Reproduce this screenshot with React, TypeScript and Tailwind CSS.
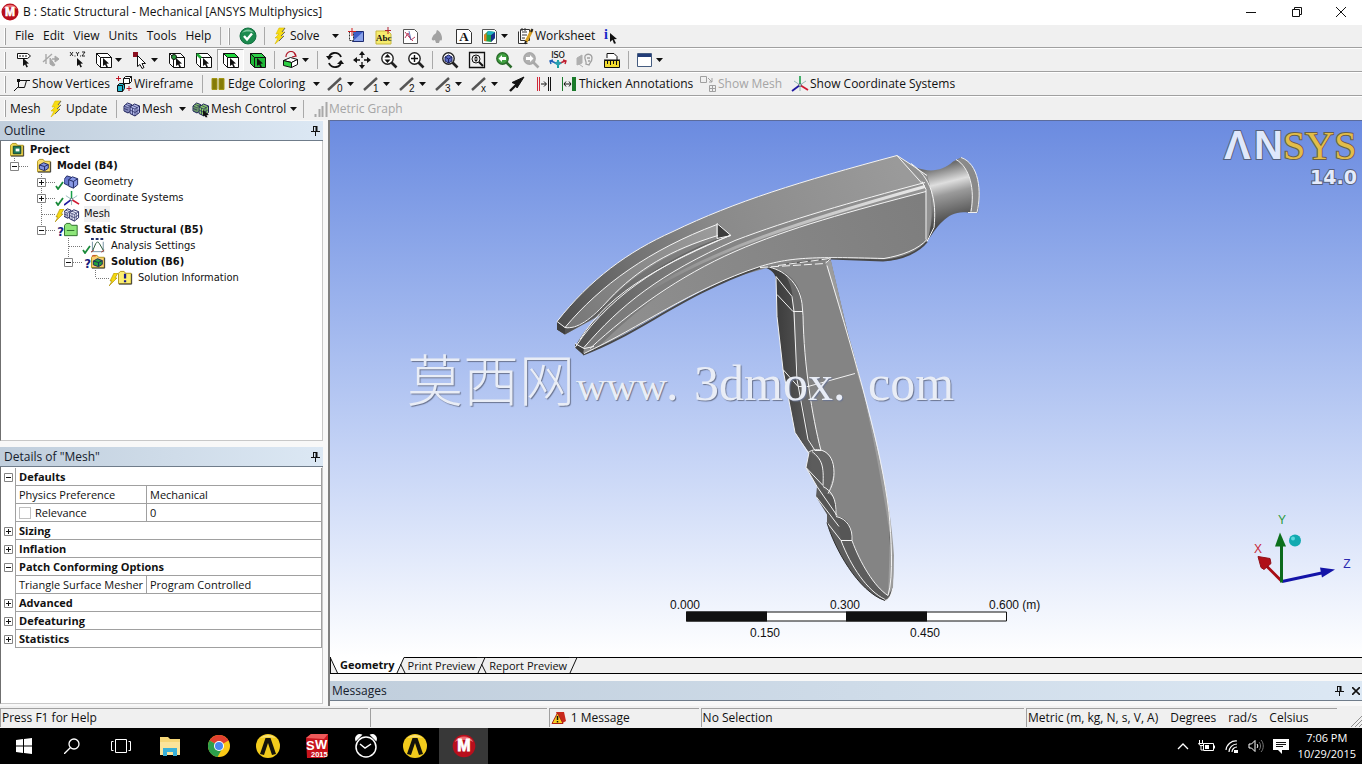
import { useState } from 'react';
import type { ReactNode } from 'react';

interface ChildrenProps {
  children: ReactNode;
}

/* ---------- Icon primitives ---------- */

function Glyph({ children }: ChildrenProps) {
  return (
    <svg viewBox="0 0 18 18" className="h-[18px] w-[18px] shrink-0" fill="none" stroke="#111" aria-hidden="true">
      {children}
    </svg>
  );
}

const Cursor = () => (
  <path d="M8 7l6 5.6-2.6.2 1.5 3-1.4.6-1.4-3L8 15z" fill="#111" stroke="none" />
);

function SelectCube({ face = 'none', body = '#fff' }: { face?: string; body?: string }) {
  return (
    <>
      <path d="M1.5 2.5h11l4 4v10h-11l-4-4z" fill={body} />
      <path d="M1.5 2.5h11l4 4h-11z" fill={face} />
      <path d="M5.5 6.5v10" />
      <Cursor />
    </>
  );
}

const Bolt = () => (
  <Glyph>
    <path d="M8 1h6l-3 4h3l-4 4h3L4 17l3-6H4l4-4H5z" fill="#f7dc12" stroke="#d8b800" strokeWidth=".6" />
    <path d="M14 1l-3 4M14 5l-4 4M13 9l-5 5" stroke="#666" strokeWidth="1" />
  </Glyph>
);

const MeshCubes = ({ fill = '#b4bbea' }: { fill?: string }) => (
  <>
    <path d="M1 6l3.500-3 4 1.500v6L5 13l-4-2z" fill={fill} stroke="#20245c" />
    <path d="M1 6l4 1.500V13M5 7.500l3.500-3M1 8.500l4 1.500M3 4.500l4 1.500M3 7v5" stroke="#20245c" strokeWidth=".7" />
    <path d="M7 7l4.500-3 5 2v6.500L12 16l-5-2.500z" fill={fill} stroke="#20245c" />
    <path d="M7 7l5 2v7M12 9l4.500-3M7 10l5 2.500 4.500-3M9.500 8v7M9.500 5.500l4.500 2V14" stroke="#20245c" strokeWidth=".7" />
  </>
);

const Lens = ({ color = '#222', fill = '#fff' }: { color?: string; fill?: string }) => (
  <>
    <path d="M11.500 11.500l5 5" stroke={color} strokeWidth="2.600" />
    <circle cx="7.500" cy="7.500" r="5.700" fill={fill} stroke={color} strokeWidth="1.400" />
  </>
);

const Axes = () => (
  <>
    <path d="M9 10V1" stroke="#18a04a" strokeWidth="1.600" />
    <path d="M9 10l-8 6" stroke="#2018a0" strokeWidth="1.800" />
    <path d="M9 10l8 5" stroke="#d01830" strokeWidth="1.800" />
    <path d="M9 10L3 6M9 10l6-4M9 10v6" stroke="#7aa8a8" strokeWidth=".8" />
    <circle cx="9" cy="10" r="1.300" fill="#fff" stroke="#345" strokeWidth=".7" />
  </>
);

const EdgeIcon = ({ mark }: { mark: string }) => (
  <Glyph>
    <path d="M1 15L14 3" stroke="#555" strokeWidth="2.400" />
    <text x="10" y="17" fontSize="10" fill="#111" stroke="none" fontFamily="Liberation Sans, sans-serif">
      {mark}
    </text>
  </Glyph>
);

const Caret = () => (
  <svg viewBox="0 0 7 4" className="h-1 w-[7px] shrink-0" aria-hidden="true">
    <path d="M0 0h7L3.500 4z" fill="#111" />
  </svg>
);

const Pin = () => (
  <svg viewBox="0 0 9 11" className="h-[11px] w-[9px]" fill="none" stroke="#111" aria-hidden="true">
    <path d="M2.500 1v5M2 1.500h4M0 6.500h9M4.500 7v4" />
    <path d="M5.500 1v5" strokeWidth="2" />
  </svg>
);

/* ---------- Toolbar pieces ---------- */

const Handle = () => <span className="mr-1 ml-1 h-[17px] w-[2px] shrink-0 border-r border-[#a0a0a0] bg-white" />;
const Separator = () => <span className="mx-[3px] h-[18px] w-px shrink-0 bg-[#a9a9a9]" />;

interface ToolProps {
  label: string;
  children: ReactNode;
  drop?: boolean;
  active?: boolean;
}

function Tool({ label, children, drop = false, active = false }: ToolProps) {
  const width = drop ? 'w-9 pl-1 gap-[2px]' : 'w-[27px] justify-center';
  const look = active ? 'border border-[#a0a0a0] border-r-white border-b-white bg-[#f8f8f8]' : '';
  return (
    <button type="button" aria-label={label} className={`flex h-[22px] shrink-0 items-center ${width} ${look}`}>
      {children}
      {drop && <Caret />}
    </button>
  );
}

interface TextToolProps {
  label: string;
  width: string;
  children?: ReactNode;
  drop?: boolean;
  disabled?: boolean;
}

function TextTool({ label, width, children, drop = false, disabled = false }: TextToolProps) {
  return (
    <button
      type="button"
      disabled={disabled}
      className={`flex h-[22px] shrink-0 items-center gap-px px-[3px] whitespace-nowrap ${width} ${disabled ? 'text-[#a5a5a5]' : ''}`}
    >
      {children}
      <span>{label}</span>
      {drop && (
        <span className="ml-auto">
          <Caret />
        </span>
      )}
    </button>
  );
}

function ToolRow({ children }: ChildrenProps) {
  return (
    <div className="flex h-6 items-center overflow-hidden border-b border-[#a0a0a0] border-t border-t-white">
      <Handle />
      {children}
    </div>
  );
}

/* ---------- Title bar ---------- */

const MechanicalLogo = ({ size }: { size: string }) => (
  <svg viewBox="0 0 18 18" className={size} aria-hidden="true">
    <circle cx="9" cy="9" r="8.500" fill="#b80f1c" />
    <path d="M2 6a8 8 0 0114 0c-4-2-10-2-14 0z" fill="#ec6d72" />
    <text x="9" y="13" textAnchor="middle" fontSize="12" fontWeight="900" fill="#fff" stroke="#fff" strokeWidth=".6" fontFamily="Liberation Sans, sans-serif">
      M
    </text>
  </svg>
);

function TitleBar() {
  return (
    <header className="flex h-6 shrink-0 items-center bg-white pl-px">
      <MechanicalLogo size="h-[18px] w-[18px]" />
      <h1 className="ml-1 flex-1">B : Static Structural - Mechanical [ANSYS Multiphysics]</h1>
      <div className="flex h-5">
        <button type="button" aria-label="Minimize" className="flex w-[46px] items-center justify-center">
          <svg viewBox="0 0 10 10" className="h-[10px] w-[10px]" stroke="#111">
            <path d="M0 5.500h10" />
          </svg>
        </button>
        <button type="button" aria-label="Restore" className="flex w-[46px] items-center justify-center">
          <svg viewBox="0 0 10 10" className="h-[10px] w-[10px]" fill="none" stroke="#111">
            <path d="M.5 2.500h7v7h-7zM2.500 2.500v-2h7v7h-2" />
          </svg>
        </button>
        <button type="button" aria-label="Close" className="flex w-[42px] items-center justify-center">
          <svg viewBox="0 0 10 10" className="h-[10px] w-[10px]" stroke="#111">
            <path d="M0 0l10 10M10 0L0 10" />
          </svg>
        </button>
      </div>
    </header>
  );
}

/* ---------- Toolbars ---------- */

const MENUS = ['File', 'Edit', 'View', 'Units', 'Tools', 'Help'];

function MenuRow() {
  return (
    <ToolRow>
      <nav className="flex w-[207px] shrink-0 gap-px pl-px">
        {MENUS.map((menu) => (
          <button key={menu} type="button" className="px-1">
            {menu}
          </button>
        ))}
      </nav>
      <Separator />
      <Handle />
      <Tool label="Check">
        <Glyph>
          <circle cx="9" cy="9" r="8" fill="#1c8a4e" stroke="#127040" />
          <path d="M3 6a7 7 0 0112 0c-3-2-9-2-12 0z" fill="#7cc79c" stroke="none" />
          <path d="M5 9l3 3.500 5-6" stroke="#fff" strokeWidth="2.400" />
        </Glyph>
      </Tool>
      <Separator />
      <TextTool label="Solve" width="w-[74px]" drop>
        <Bolt />
      </TextTool>
      <Tool label="New Section Plane">
        <Glyph>
          <path d="M5.500 4.500h11v10h-11z" fill="#3f5fc8" stroke="#1c2a70" />
          <path d="M6 14L16 5v9z" fill="#89a2ea" stroke="none" />
          <path d="M2.500 4.500h4v9h-4z" fill="#fff" stroke="#333" strokeDasharray="2 1" />
          <path d="M5 1v8M1 4.500h8" stroke="#d02020" />
        </Glyph>
      </Tool>
      <Tool label="New Chart">
        <Glyph>
          <path d="M2 4h12l3 3v10H2z" fill="#f6ec6c" stroke="#c8b840" />
          <text x="2" y="14" fontSize="9" fontWeight="700" fill="#111" stroke="none" fontFamily="Liberation Serif, serif">
            Abc
          </text>
          <path d="M14 0v7M11 3.500h6" stroke="#b02030" />
        </Glyph>
      </Tool>
      <Tool label="New Figure">
        <Glyph>
          <path d="M2.500 2.500h11l3 3v11h-14z" fill="#fff" stroke="#555" />
          <path d="M4 5l4 5 4 4M4 11l3-5 3 7 4-3" stroke="#c04060" />
          <path d="M8 4l2 9" stroke="#4060b0" strokeWidth=".8" />
        </Glyph>
      </Tool>
      <Tool label="Comment">
        <Glyph>
          <path d="M9 3c3 1 5 5 5 8s-1 3-2 2l-1 3H8l-1-3c-2 1-4 0-3-2s1-3 3-4 1-3 2-4z" fill="#a2a2a2" stroke="none" />
        </Glyph>
      </Tool>
      <Tool label="Annotation">
        <Glyph>
          <path d="M1.500 2.500h12l3 3v11h-15z" fill="#fff" stroke="#333" />
          <text x="9" y="14" textAnchor="middle" fontSize="13" fontWeight="700" fill="#111" stroke="none" fontFamily="Liberation Serif, serif">
            A
          </text>
        </Glyph>
      </Tool>
      <Tool label="Image" drop>
        <Glyph>
          <path d="M1.500 2.500h12l2 2v12h-14z" fill="#fff" stroke="#555" />
          <path d="M3 8l4-4 7 1v6l-4 4-7-1z" fill="#1fa04a" stroke="none" />
          <path d="M10 8l4-3v6l-4 4z" fill="#18308a" stroke="none" />
          <path d="M3 8l2.500-2v8L3 14z" fill="#e08020" stroke="none" />
          <path d="M7 4l7 1-4 3-4-.5z" fill="#20b0c8" stroke="none" />
        </Glyph>
      </Tool>
      <TextTool label="Worksheet" width="w-[84px]">
        <Glyph>
          <path d="M4.500 2.500h9v11h-9zM2.500 4.500v12h9" fill="#fff" stroke="#333" />
          <path d="M6 5h5M6 8h5M6 11h3M6 1v3M9 1v3" stroke="#333" />
          <path d="M16 3l-6 12" stroke="#d8a020" strokeWidth="3" />
          <path d="M16.500 2l-1.500 3M9 17l1-3" stroke="#222" strokeWidth="2" />
        </Glyph>
      </TextTool>
      <Tool label="Selection Information">
        <Glyph>
          <text x="2" y="12" fontSize="14" fontWeight="700" fill="#1828c8" stroke="none" fontFamily="Liberation Serif, serif">
            i
          </text>
          <path d="M8 6l7 6-3 .2 2 4-2 .6-1.500-4L8 15z" fill="#111" stroke="none" />
        </Glyph>
      </Tool>
    </ToolRow>
  );
}

function GraphicsRow() {
  return (
    <ToolRow>
      <Tool label="Label">
        <Glyph>
          <path d="M2.500 2.500h10l3 2.500-3 2.500h-10z" fill="#fff" />
          <path d="M5 4v2M8 4v2M11 4v2" />
          <Cursor />
        </Glyph>
      </Tool>
      <Tool label="Direction">
        <Glyph>
          <g stroke="#a8a8a8">
            <path d="M1 11l9-8M4 3v10M10 8h6" strokeWidth="1.400" />
            <path d="M13 5l4 3-4 3zM8 7l5 7-2 1-3-2z" fill="#a8a8a8" />
          </g>
        </Glyph>
      </Tool>
      <Tool label="Hit Point Coordinate">
        <Glyph>
          <path d="M1 1l3 4M4 1L1 5M7 1l1.500 2L10 1M8.500 3v2M13 1h3l-3 4h3M5.500 5h1M11 5h1" strokeWidth=".9" />
          <Cursor />
        </Glyph>
      </Tool>
      <Tool label="Select Geometry" drop>
        <Glyph>
          <SelectCube />
        </Glyph>
      </Tool>
      <Tool label="Select Mode" drop>
        <Glyph>
          <path d="M2 1h5v5H2z" fill="#8c1020" stroke="none" />
          <path d="M6.500 4.500l8 8h-3.500l2 4-2 1-2-4-2.500 2z" fill="#fff" />
        </Glyph>
      </Tool>
      <Tool label="Vertex">
        <Glyph>
          <SelectCube />
          <circle cx="6" cy="6" r="2.500" fill="#2a9a3a" />
        </Glyph>
      </Tool>
      <Tool label="Edge">
        <Glyph>
          <SelectCube />
          <path d="M2 3l4 4" stroke="#1fae35" strokeWidth="2.500" />
        </Glyph>
      </Tool>
      <Tool label="Face" active>
        <Glyph>
          <SelectCube face="#1fd63c" />
        </Glyph>
      </Tool>
      <Tool label="Body">
        <Glyph>
          <SelectCube face="#2cd048" body="#1fb838" />
        </Glyph>
      </Tool>
      <Separator />
      <Tool label="Extend Selection" drop>
        <Glyph>
          <path d="M1.500 9.500l7-3 7 2-6 3z" fill="#fff" />
          <path d="M1.500 9.500l8 2v5l-8-2z" fill="#2fd044" />
          <path d="M9.500 11.500l6-3v5l-6 3z" fill="#fff" />
          <path d="M4 6a5 5 0 0110-1M12 2l2 3-4 1" stroke="#b01828" strokeWidth="1.200" />
        </Glyph>
      </Tool>
      <Separator />
      <Tool label="Rotate">
        <Glyph>
          <path d="M3 8a6 5 0 0112-2M15 10a6 5 0 01-12 2" strokeWidth="1.800" />
          <path d="M0 5h7L3 9zM18 13h-7l4-4z" fill="#111" stroke="none" />
        </Glyph>
      </Tool>
      <Tool label="Pan">
        <Glyph>
          <path d="M9 2v14M2 9h14" strokeDasharray="5 4" strokeWidth="1.300" />
          <path d="M9 0l3 4H6zM9 18l3-4H6zM0 9l4-3v6zM18 9l-4-3v6z" fill="#111" stroke="none" />
        </Glyph>
      </Tool>
      <Tool label="Zoom">
        <Glyph>
          <Lens />
          <path d="M7.500 3l3 3.500h-6zM7.500 12l3-3.500h-6z" fill="#111" stroke="none" />
        </Glyph>
      </Tool>
      <Tool label="Box Zoom">
        <Glyph>
          <Lens />
          <path d="M7.500 4v7M4 7.500h7" strokeWidth="1.400" />
        </Glyph>
      </Tool>
      <Separator />
      <Tool label="Zoom To Fit">
        <Glyph>
          <Lens />
          <path d="M4 6l3.500-2L11 6v4l-3.500 2L4 10z" fill="#5a6ac8" stroke="#1c2460" />
          <path d="M4 6l3.500 2L11 6M7.500 8v4" stroke="#1c2460" />
        </Glyph>
      </Tool>
      <Tool label="Magnifier Window">
        <Glyph>
          <path d="M1.500 1.500h15v15h-15z" strokeWidth="1.300" />
          <circle cx="8" cy="8" r="4" />
          <path d="M11 11l4 4" strokeWidth="2" />
          <path d="M8 5l2 2.500H6zM8 11l2-2.500H6z" fill="#111" stroke="none" />
        </Glyph>
      </Tool>
      <Tool label="Previous View">
        <Glyph>
          <Lens color="#2a6a2a" fill="#3fa040" />
          <path d="M3.500 7.500L7 4v2h4v3H7v2z" fill="#fff" stroke="none" />
        </Glyph>
      </Tool>
      <Tool label="Next View">
        <Glyph>
          <Lens color="#a8a8a8" fill="#b0b0b0" />
          <path d="M11.500 7.500L8 4v2H4v3h4v2z" fill="#fff" stroke="none" />
        </Glyph>
      </Tool>
      <Tool label="Isometric View">
        <Glyph>
          <text x="9" y="7" textAnchor="middle" fontSize="8" fill="#111" stroke="#111" strokeWidth=".2" fontFamily="DejaVu Sans, sans-serif">
            ISO
          </text>
          <path d="M9 17V9" stroke="#18a0a0" strokeWidth="2" />
          <path d="M9 13l-7-3M4 9l-3 1 1 3" stroke="#2060b8" strokeWidth="1.400" />
          <path d="M9 13l7-3M14 9l3 1-1 3" stroke="#c02030" strokeWidth="1.400" />
          <path d="M5 12l4-2 4 2-4 3z" fill="#2aa0b0" stroke="none" />
        </Glyph>
      </Tool>
      <Tool label="Look At">
        <Glyph>
          <path d="M1 14V7l5-3v8zM3 13l4 3" fill="#b0b0b0" stroke="#b0b0b0" />
          <path d="M9 5c2-3 7-2 7 2s-2 4-3 7l-3-1c1-3-2-4-1-8zM11 7h3M12 10h2" stroke="#a0a0a0" strokeWidth="1.300" />
        </Glyph>
      </Tool>
      <Tool label="Manage Views">
        <Glyph>
          <path d="M4 7V2.500h7l3 3V9" fill="#fff" />
          <path d="M1.500 9.500h15v7h-15z" fill="#f3dc30" />
          <path d="M4.500 10v3M7.500 10v4M10.500 10v3M13.500 10v4M1 9h16" />
        </Glyph>
      </Tool>
      <Separator />
      <Tool label="Viewports" drop>
        <Glyph>
          <path d="M1.500 2.500h14v13h-14z" fill="#fff" stroke="#455c80" />
          <path d="M2 3h13v3H2z" fill="#223c78" stroke="none" />
        </Glyph>
      </Tool>
    </ToolRow>
  );
}

function DisplayRow() {
  return (
    <ToolRow>
      <TextTool label="Show Vertices" width="w-[102px]">
        <Glyph>
          <path d="M4 5.500h13M13.500 5.500l-2 7h-6v-7M1 16l4-4" />
          <path d="M4 4h3v3H4z" fill="#111" stroke="none" />
        </Glyph>
      </TextTool>
      <TextTool label="Wireframe" width="w-[87px]">
        <Glyph>
          <path d="M2.500 10.500l2-2h5v5l-2 3h-5z" fill="#22b8d0" />
          <path d="M2.500 10.500h5v6M7.500 10.500l2-2" />
          <path d="M8.500 3.500l2-2h6v5l-2 2h-6zM8.500 3.500h6v5M14.500 3.500l2-2" fill="#fff" />
          <path d="M3.500 1v5M1 3.500h5M14 11v5M11.500 13.500h5" stroke="#c01828" />
        </Glyph>
      </TextTool>
      <Separator />
      <TextTool label="Edge Coloring" width="w-[117px]" drop>
        <Glyph>
          <path d="M3 3.500h5v11H3zM10 3.500h5v11h-5z" fill="#857b08" stroke="#a39614" />
        </Glyph>
      </TextTool>
      {['0', '1', '2', '3', 'x'].map((mark) => (
        <Tool key={mark} label={`Edge connection ${mark}`} drop>
          <EdgeIcon mark={mark} />
        </Tool>
      ))}
      <Tool label="Show edge direction">
        <Glyph>
          <path d="M2 16l8-8" strokeWidth="2.400" />
          <path d="M16 2L4 7.500l3.500 1.500L9 13z" fill="#111" />
        </Glyph>
      </Tool>
      <Tool label="Show edge joints">
        <Glyph>
          <path d="M2.500 2v14M4.500 2v14" stroke="#d02838" />
          <path d="M13.500 2v14M15.500 2v14M6 9h5M9 6.500L11.500 9 9 11.500" />
        </Glyph>
      </Tool>
      <TextTool label="Thicken Annotations" width="w-[139px]">
        <Glyph>
          <path d="M2.500 2v14" stroke="#1a7a2a" />
          <path d="M12 2h4v14h-4z" fill="#1a7a2a" stroke="none" />
          <path d="M4 9h7M6 6.500L4 9l2 2.500M9 6.500L11 9l-2 2.500" />
        </Glyph>
      </TextTool>
      <TextTool label="Show Mesh" width="w-[92px]" disabled>
        <Glyph>
          <path d="M1.500 1.500h6v6h-6zM9 3l4 4M13 3v4h-3M10.500 10.500h6v6h-6zM13.500 10.500v6M10.500 13.500h6" stroke="#a0a0a0" />
        </Glyph>
      </TextTool>
      <TextTool label="Show Coordinate Systems" width="w-[172px]">
        <Glyph>
          <Axes />
        </Glyph>
      </TextTool>
    </ToolRow>
  );
}

function MeshRow() {
  return (
    <div className="flex h-6 items-center overflow-hidden border-t border-white">
      <Handle />
      <span className="w-[34px] shrink-0">Mesh</span>
      <TextTool label="Update" width="w-[69px]">
        <Bolt />
      </TextTool>
      <Separator />
      <TextTool label="Mesh" width="w-[69px]" drop>
        <Glyph>
          <MeshCubes />
        </Glyph>
      </TextTool>
      <TextTool label="Mesh Control" width="w-[111px]" drop>
        <Glyph>
          <MeshCubes fill="#8fd06a" />
          <path d="M11 10l6 5-2.500.3 1 2h-2l-1-2-1.500 1z" fill="#111" stroke="none" />
        </Glyph>
      </TextTool>
      <Separator />
      <TextTool label="Metric Graph" width="w-[100px]" disabled>
        <Glyph>
          <path d="M5.500 17v-3M9.500 17V9M12.500 17V6M16.500 17V2" stroke="#a8a8a8" strokeWidth="2" />
        </Glyph>
      </TextTool>
    </div>
  );
}

/* ---------- Outline ---------- */

function PanelHeader({ title, closable = false }: { title: string; closable?: boolean }) {
  return (
    <div
      className={`flex h-5 shrink-0 items-center gap-2 border-b border-[#6f7c8a] bg-linear-to-r from-[#c0cedc] to-[#dce8f4] text-[#16202c] ${closable ? 'px-[2px]' : 'pr-[3px] pl-1'}`}
    >
      <h2 className="flex-1">{title}</h2>
      <button type="button" aria-label={`Pin ${title}`}>
        <Pin />
      </button>
      {closable && (
        <button type="button" aria-label={`Close ${title}`}>
          <svg viewBox="0 0 8 8" className="h-2 w-2" stroke="#111" strokeWidth="1.600">
            <path d="M0 0l8 8M8 0L0 8" />
          </svg>
        </button>
      )}
    </div>
  );
}

const Folder = ({ fill, children }: { fill: string; children?: ReactNode }) => (
  <>
    <path d="M1.500 3.500l2-2h4l1.500 2h6v11h-13.500z" fill={fill} stroke="#b09418" />
    <path d="M15.500 4v11H2" stroke="#333" />
    {children}
  </>
);

const SmallCube = ({ fill }: { fill: string }) => (
  <>
    <path d="M3.500 7.500L8 5l5 2v4l-4 2.500-5.500-2z" fill={fill} stroke="#20245c" />
    <path d="M3.500 7.500L9 9l4-2M9 9v4" stroke="#20245c" />
  </>
);

const TREE_ICONS: Record<string, ReactNode> = {
  project: (
    <Folder fill="#f0d850">
      <path d="M4.500 4.500h8v8h-8z" fill="#1f7a5a" stroke="#0c4030" />
      <path d="M7 7h4v3H7z" fill="#fff" stroke="none" />
    </Folder>
  ),
  model: (
    <Folder fill="#f8dc6c">
      <SmallCube fill="#7f92e0" />
    </Folder>
  ),
  geometry: (
    <>
      <path d="M1 6l3-4 5 1.500v6L5 12l-4-2z" fill="#6878cc" stroke="#1c2460" />
      <path d="M6 6l4-3 5.500 2v6.500L11 15l-5-2z" fill="#8898e4" stroke="#1c2460" />
      <path d="M6 6l5 2v7M11 8l4.500-3" stroke="#1c2460" />
    </>
  ),
  axes: <Axes />,
  mesh: <MeshCubes fill="#eceefc" />,
  static: (
    <>
      <path d="M1.500 3.500l2-2h4l1.500 2h6v11h-13.500z" fill="#8ee67a" stroke="#2a6a28" />
      <path d="M4 9h8" stroke="#2a6a28" />
    </>
  ),
  analysis: (
    <>
      <path d="M1 1h3M6 1h3M11 1h3" stroke="#203070" strokeWidth="2" />
      <path d="M1 14.500h14M2.500 4v10M14 4v10" stroke="#7090a0" />
      <path d="M3 13l3-7 2-2 2 2 4 7" stroke="#205030" />
      <path d="M1 15l3-2M12 15l3-2" stroke="#b03020" />
    </>
  ),
  solution: (
    <Folder fill="#f8d070">
      <SmallCube fill="#22a03c" />
      <path d="M2 2h4" stroke="#d03020" />
    </Folder>
  ),
  info: (
    <Folder fill="#fbee70">
      <path d="M8.500 4v5M8.500 11v2" stroke="#15188c" strokeWidth="2.400" />
    </Folder>
  ),
};

type Status = 'ok' | 'stale' | 'unknown';

function StatusMark({ status }: { status?: Status }) {
  return (
    <span className="flex h-4 w-[9px] items-end justify-end text-[13px] font-bold text-[#16207c]">
      {status === 'ok' && (
        <svg viewBox="0 0 9 9" className="h-[9px] w-[9px]" fill="none" stroke="#1a8a3a" strokeWidth="1.800">
          <path d="M1 5l2 3 5-7" />
        </svg>
      )}
      {status === 'stale' && (
        <svg viewBox="0 0 9 13" className="h-[13px] w-[9px]">
          <path d="M5 0h4L6 5h2L0 13l3-5H1z" fill="#f5d90f" stroke="#a88800" strokeWidth=".6" />
        </svg>
      )}
      {status === 'unknown' && <span className="leading-3">?</span>}
    </span>
  );
}

interface TreeNode {
  label: string;
  level: number;
  icon: string;
  bold?: boolean;
  toggle?: '+' | '-';
  last?: boolean;
  status?: Status;
  selected?: boolean;
}

const TREE: TreeNode[] = [
  { label: 'Project', level: 0, icon: 'project', bold: true },
  { label: 'Model (B4)', level: 1, icon: 'model', bold: true, toggle: '-', last: true },
  { label: 'Geometry', level: 2, icon: 'geometry', toggle: '+', status: 'ok' },
  { label: 'Coordinate Systems', level: 2, icon: 'axes', toggle: '+', status: 'ok' },
  { label: 'Mesh', level: 2, icon: 'mesh', status: 'stale', selected: true },
  { label: 'Static Structural (B5)', level: 2, icon: 'static', bold: true, toggle: '-', last: true, status: 'unknown' },
  { label: 'Analysis Settings', level: 3, icon: 'analysis', status: 'ok' },
  { label: 'Solution (B6)', level: 3, icon: 'solution', bold: true, toggle: '-', last: true, status: 'unknown' },
  { label: 'Solution Information', level: 4, icon: 'info', last: true, status: 'stale' },
];

function Branch({ toggle, last }: { toggle?: '+' | '-'; last?: boolean }) {
  const lines = (
    <svg viewBox="0 0 27 16" className="h-4 w-[27px]" fill="none" stroke="#777">
      <path d={last ? 'M13.500 0v8' : 'M13.500 0v16'} strokeDasharray="1 1" />
      <path d="M14 8.500h13" strokeDasharray="1 1" />
      {toggle && <path d="M9.500 4.500h8v8h-8z" fill="#fff" stroke="#848484" />}
      {toggle && <path d={toggle === '+' ? 'M11 8.500h5M13.500 6v5' : 'M11 8.500h5'} stroke="#111" />}
    </svg>
  );
  if (!toggle) return lines;
  return (
    <button type="button" aria-label={toggle === '+' ? 'Expand' : 'Collapse'}>
      {lines}
    </button>
  );
}

function Outline() {
  return (
    <section className="flex flex-1 flex-col">
      <PanelHeader title="Outline" />
      <ul className="flex-1 border border-t-0 border-l-[#6f6f6f] border-r-[#c8c8c8] border-b-[#c8c8c8] bg-white pt-px font-['DejaVu_Sans_Condensed','DejaVu_Sans',sans-serif] text-[11px] leading-4">
        {TREE.map((node) => (
          <li key={node.label} className="flex h-4 items-center">
            {Array.from({ length: Math.max(node.level - 1, 0) }, (_, i) => (
              <span key={i} className="w-[27px]" />
            ))}
            {node.level > 0 && <Branch toggle={node.toggle} last={node.last} />}
            <StatusMark status={node.status} />
            <svg viewBox="1 0 17 17" className="h-4 w-4" fill="none" aria-hidden="true">
              {TREE_ICONS[node.icon]}
            </svg>
            <span
              className={`ml-1 whitespace-nowrap ${node.bold ? 'font-bold' : ''} ${node.selected ? 'bg-[#f0f0f0]' : ''}`}
            >
              {node.label}
            </span>
          </li>
        ))}
      </ul>
    </section>
  );
}

/* ---------- Details ---------- */

interface DetailRow {
  name: string;
  value?: string;
  toggle?: '+' | '-';
  checkbox?: boolean;
}

const DETAILS: DetailRow[] = [
  { name: 'Defaults', toggle: '-' },
  { name: 'Physics Preference', value: 'Mechanical' },
  { name: 'Relevance', value: '0', checkbox: true },
  { name: 'Sizing', toggle: '+' },
  { name: 'Inflation', toggle: '+' },
  { name: 'Patch Conforming Options', toggle: '-' },
  { name: 'Triangle Surface Mesher', value: 'Program Controlled' },
  { name: 'Advanced', toggle: '+' },
  { name: 'Defeaturing', toggle: '+' },
  { name: 'Statistics', toggle: '+' },
];

function Details() {
  const [relevance, setRelevance] = useState(false);

  return (
    <section className="flex h-[257px] shrink-0 flex-col">
      <PanelHeader title='Details of "Mesh"' />
      <div className="flex-1 border border-t-0 border-l-[#6f6f6f] border-r-[#c8c8c8] border-b-[#c8c8c8] bg-white pt-px">
        <table className="w-full table-fixed border-separate border-spacing-0 text-[11px] leading-[17px]">
          <colgroup>
            <col className="w-[15px]" />
            <col className="w-[131px]" />
            <col />
          </colgroup>
          <tbody>
            {DETAILS.map((row) => (
              <tr key={row.name} className="h-[18px]">
                <td className="border-r border-[#a0a0a0] p-0">
                  {row.toggle && (
                    <button type="button" aria-label={`Toggle ${row.name}`} className="flex w-full justify-center">
                      <svg viewBox="0 0 9 9" className="h-[9px] w-[9px]" fill="none" stroke="#111">
                        <path d="M.5.5h8v8h-8z" stroke="#848484" />
                        <path d={row.toggle === '+' ? 'M2 4.500h5M4.500 2v5' : 'M2 4.500h5'} />
                      </svg>
                    </button>
                  )}
                </td>
                {row.toggle ? (
                  <th colSpan={2} className="border-r border-b border-[#a0a0a0] p-0 pl-[3px] text-left font-bold">
                    {row.name}
                  </th>
                ) : (
                  <>
                    <td className="overflow-hidden border-r border-b border-[#a0a0a0] p-0 pl-[3px] whitespace-nowrap">
                      {row.checkbox ? (
                        <label className="flex items-center gap-1">
                          <input
                            type="checkbox"
                            checked={relevance}
                            onChange={(e) => setRelevance(e.target.checked)}
                            className="h-3 w-3 appearance-none border border-[#c0c0c0] bg-white checked:bg-gray-500"
                          />
                          {row.name}
                        </label>
                      ) : (
                        row.name
                      )}
                    </td>
                    <td className="border-r border-b border-[#a0a0a0] p-0 pl-[3px]">{row.value}</td>
                  </>
                )}
              </tr>
            ))}
          </tbody>
        </table>
      </div>
    </section>
  );
}

/* ---------- Graphics view ---------- */

function Hammer() {
  return (
    <g strokeLinejoin="round" fill="none">
      <defs>
        <linearGradient id="topFace" x1="560" y1="330" x2="900" y2="170" gradientUnits="userSpaceOnUse">
          <stop offset="0" stopColor="#4e4e4e" />
          <stop offset=".25" stopColor="#727272" />
          <stop offset=".5" stopColor="#8a8a8a" />
          <stop offset="1" stopColor="#9a9a9a" />
        </linearGradient>
        <linearGradient id="sideFace" x1="600" y1="340" x2="920" y2="200" gradientUnits="userSpaceOnUse">
          <stop offset="0" stopColor="#909090" />
          <stop offset="1" stopColor="#7e7e7e" />
        </linearGradient>
        <linearGradient id="ridge" x1="590" y1="330" x2="925" y2="185" gradientUnits="userSpaceOnUse">
          <stop offset="0" stopColor="#787878" />
          <stop offset="1" stopColor="#949494" />
        </linearGradient>
        <linearGradient id="shine" x1="640" y1="300" x2="925" y2="185" gradientUnits="userSpaceOnUse">
          <stop offset="0" stopColor="#fff" stopOpacity="0" />
          <stop offset=".6" stopColor="#fff" stopOpacity=".5" />
          <stop offset="1" stopColor="#fff" stopOpacity=".8" />
        </linearGradient>
        <linearGradient id="slot" x1="565" y1="330" x2="720" y2="230" gradientUnits="userSpaceOnUse">
          <stop offset="0" stopColor="#767676" />
          <stop offset="1" stopColor="#9c9c9c" />
        </linearGradient>
        <linearGradient id="neck" x1="942" y1="166" x2="956" y2="222" gradientUnits="userSpaceOnUse">
          <stop offset="0" stopColor="#6e6e6e" />
          <stop offset=".3" stopColor="#dedede" />
          <stop offset=".5" stopColor="#9a9a9a" />
          <stop offset="1" stopColor="#484848" />
        </linearGradient>
        <linearGradient id="grip" x1="776" y1="0" x2="812" y2="0" gradientUnits="userSpaceOnUse">
          <stop offset="0" stopColor="#3c3c3c" />
          <stop offset="1" stopColor="#5c5c5c" />
        </linearGradient>
      </defs>

      {/* handle */}
      <path
        d="M762 267C772 270 776 274 776 282L777 317 783 370 795 433 809 453 806 468 817 487 816 497 827 513 827 523C834 548 858 592 885 601 893 600 894 580 893 557 889 500 874 434 857 373L830 258 790 258z"
        fill="url(#grip)"
      />
      <path
        d="M766 267C782 270 799 280 802 304L804 350C806 385 812 420 820 451 830 452 836 466 833 476L828 494C836 497 838 508 836 517 848 518 854 532 852 541 862 566 876 590 888 596 890 580 892 560 888 520 880 460 866 400 852 348L827 260z"
        fill="#848484"
      />
      <path d="M825 262l27 86c14 52 30 130 38 190l-2 58 5-8 1-32c-4-60-18-120-37-183l-26-112z" fill="#9c9c9c" />
      <path d="M793 304c2 50 5 90 20 146l7 1c-9-40-16-92-18-150-2-16-9-22-20-30 8 10 11 20 11 33z" fill="#6a6a6a" />
      <path d="M809 453c10-6 24 0 24 20l-5 20-5-4c3-14 2-28-14-36z" fill="#666" />
      <path d="M828 494c7 4 9 12 8 23 12 0 18 14 16 24l-11-2c-2-12-6-20-14-24l-11-18z" fill="#565656" />
      <g stroke="#f2f2f2" strokeWidth="1">
        <path d="M776 277l16 20 2 15 3 68 11 60 7 11h6M766 267c18 3 33 16 36 37l1 12c1 50 9 100 18 135" />
        <path d="M777 295l16 17h10M783 370l15 17 10 0 47-13M795 433l13 20M776 277l1 40 6 53 12 63" />
        <path d="M808 453c8-6 26-4 26 20 0 8-2 14-6 21M812 452c10 8 12 14 11 34M806 468l17 18M809 453l-3 15 11 19" />
        <path d="M823 487c8 4 14 12 13 29M817 487l20 29M816 497l23 30M836 517c11 2 17 12 16 24H841" />
        <path d="M852 541c8 22 22 46 36 55 6-20 3-60 1-83-8-66-30-140-62-247M841 541c10 26 26 50 44 59M827 523l14 18" />
        <path d="M893 590c-2 8-6 11-9 11" />
      </g>
      <path d="M827 523C834 548 858 592 885 601" stroke="#2e2e2e" />

      {/* neck and striking face */}
      <path
        d="M903 160C918 172 938 176 953 162L961 158C976 164 982 188 978 213L968 213C948 210 938 226 927 242L920 200z"
        fill="url(#neck)"
      />
      <path d="M961 158c17 6 22 34 16 55h-7c4-20 2-44-14-52z" fill="#8a8a8a" />
      <path d="M956 160c14 8 19 30 15 52M961 158c18 6 21 34 16 55h-9" stroke="#f0f0f0" />

      {/* head */}
      <path
        d="M557 322C590 280 628 252 673 232 735 202 800 182 897 156L911 165 927 176C934 196 934 220 927 242 912 256 896 262 883 261L830 259C780 262 740 274 700 292 650 318 620 340 583 355L575 348C583 332 592 322 602 315L565 335 557 330z"
        fill="url(#sideFace)"
      />
      <path
        d="M557 322C590 280 628 252 673 232 735 202 800 182 897 156L925 184C850 205 780 228 720 250 660 278 620 312 583 348L575 348C583 332 592 322 606 312L565 335 557 330z"
        fill="url(#topFace)"
      />
      <path
        d="M584 348C620 306 660 274 735 241 790 220 850 203 925 183L926 192C850 212 790 228 730 254 680 278 640 306 596 350z"
        fill="url(#ridge)"
      />
      <path d="M650 290C720 248 800 222 925 187" stroke="url(#shine)" strokeWidth="3" />
      <path d="M897 156l14 9 16 11c6 20 6 44 0 66l-2-58z" fill="#929292" />
      <path d="M565 328C600 286 650 250 717 225l1 11C680 248 640 270 612 298L592 316C585 322 578 327 567 329z" fill="url(#slot)" />
      <path d="M596 318C630 284 672 256 718 239l12-3C690 250 640 276 606 312z" fill="#686868" />
      <path d="M718 224l12 12-12 4z" fill="#3c3c3c" />
      <path d="M557 322l8 6v7l-8-5zM575 344l9 5-1 6-8-7z" fill="#3e3e3e" />
      <path d="M583 355C640 334 680 296 760 268M830 259l53 2c20-1 36-9 44-19" stroke="#484848" strokeWidth="2" />
      <g stroke="#f4f4f4" strokeWidth="1">
        <path d="M557 322C590 280 628 252 673 232 735 202 800 182 897 156l14 9 16 11" />
        <path d="M897 156l25 28M922 182l4 8v50M911 164c20 14 26 36 23 64l-7 14" />
        <path d="M565 328C600 286 650 250 717 225M565 328c12 2 26-8 44-28 28-30 62-50 109-64M717 224v15l14-3-14-12" />
        <path d="M580 340C610 290 670 262 730 236M575 348c40-60 100-90 155-112" />
        <path d="M584 348C620 306 660 274 735 241 790 220 850 203 925 183" />
        <path d="M590 349C630 312 680 276 735 252 790 228 850 212 926 192" />
        <path d="M557 322l8 6M575 344l9 5 10-2M584 354C640 328 690 290 760 267 790 258 810 257 884 259 902 256 918 250 927 240" />
        <path d="M760 268l65-4 6-5M778 266l52-7" strokeDasharray="8 3" />
      </g>
    </g>
  );
}

function ScaleBar() {
  return (
    <g fontFamily="Liberation Sans, Arial, sans-serif" fontSize="12" fill="#111" textAnchor="middle">
      <path d="M686.500 612.500h320v9h-320z" fill="#fff" stroke="#111" />
      <path d="M686 612h81v10h-81zM846 612h81v10h-81z" />
      <text x="685" y="609">0.000</text>
      <text x="845" y="609">0.300</text>
      <text x="989" y="609" textAnchor="start">0.600 (m)</text>
      <text x="765" y="637">0.150</text>
      <text x="925" y="637">0.450</text>
    </g>
  );
}

function Triad() {
  return (
    <g fontFamily="Liberation Sans, Arial, sans-serif" fontSize="12" textAnchor="middle">
      <path d="M1282 582l-17-17" stroke="#a80c14" strokeWidth="3" />
      <path d="M1258 557l12 2 1 5-7 6-3-2z" fill="#b01018" stroke="#901018" strokeLinejoin="round" />
      <path d="M1282 582l42-9" stroke="#1414a8" strokeWidth="3" />
      <path d="M1335 570l-15-2 2 10z" fill="#1414a8" />
      <path d="M1281.500 583v-38" stroke="#0c6a1c" strokeWidth="3" />
      <path d="M1280 533l6 14h-11z" fill="#0c701c" />
      <circle cx="1295" cy="541" r="6" fill="#12aab0" />
      <circle cx="1293" cy="539" r="2" fill="#5cd8dc" />
      <text x="1258" y="553" fill="#c8283c">
        X
      </text>
      <text x="1282" y="524" fill="#2a9a3a">
        Y
      </text>
      <text x="1347" y="568" fill="#2a2ab0">
        Z
      </text>
    </g>
  );
}

function Brand() {
  return (
    <g strokeWidth="2" paintOrder="stroke" aria-label="ANSYS 14.0">
      <g fontFamily="Liberation Sans, sans-serif" fontWeight="700" fontSize="40" fill="#dfe8fb" stroke="#55607c">
        <text x="1224" y="159">Λ</text>
        <text x="1254" y="159">N</text>
      </g>
      <text x="1283" y="159" fontFamily="Liberation Serif, serif" fontSize="40" fill="#e2bd48" stroke="#6a6048">
        SYS
      </text>
      <text x="1357" y="184" textAnchor="end" fontFamily="DejaVu Sans, sans-serif" fontWeight="700" fontSize="19" fill="#e4ebfb" stroke="#55607c">
        14.0
      </text>
    </g>
  );
}

function Watermark() {
  return (
    <g fill="#e9edf6" className="[text-shadow:1px_1px_1px_#6a7490]">
      <text x="407" y="401" fontFamily="Noto Sans CJK SC, sans-serif" fontWeight="300" fontSize="56">
        莫西网
      </text>
      <g fontFamily="Liberation Serif, serif" fontSize="50">
        <text x="576" y="400" fontSize="42">
          www
        </text>
        <text x="666" y="400">.</text>
        <text x="694" y="400">3dmox.</text>
        <text x="868" y="400">com</text>
      </g>
    </g>
  );
}

const TABS = ['Geometry', 'Print Preview', 'Report Preview'];

function TabStrip() {
  const [active, setActive] = useState('Geometry');

  return (
    <div className="flex h-[17px] shrink-0 border-b border-black bg-[#f0f0f0]">
      <svg viewBox="0 0 9 16" className="h-4 w-[9px]" fill="#fff">
        <path d="M0 0h9v16H8z" />
        <path d="M.5 0v16M.500 1l7 15" stroke="#111" />
      </svg>
      {TABS.map((tab, i) => (
        <div key={tab} className="flex">
          <button
            type="button"
            onClick={() => setActive(tab)}
            className={`text-[11px] leading-4 ${tab === active ? 'bg-white px-px font-bold' : 'border-t border-black px-[2px]'}`}
          >
            {tab}
          </button>
          <svg viewBox="0 0 10 16" className="h-4 w-[10px]" fill="none" stroke="#111">
            {tab === active && <path d="M0 0h8L1 16H0z" fill="#fff" stroke="none" />}
            <path d="M1 16L8 .5" />
            {i < TABS.length - 1 && <path d="M4.500 7L9 16" />}
            <path d={tab === active ? 'M8 .5h2' : 'M0 .5h10'} />
          </svg>
        </div>
      ))}
      <span className="flex-1 border-t border-black" />
    </div>
  );
}

function GraphicsView() {
  return (
    <main className="flex min-w-0 flex-1 flex-col border-l-2 border-[#808080]">
      <div className="min-h-0 flex-1 border-t border-[#5c6c9c] bg-linear-to-b from-[#6b8be0] to-white">
        <svg viewBox="330 122 1032 535" className="h-full w-full">
          <Hammer />
          <Watermark />
          <ScaleBar />
          <Triad />
          <Brand />
        </svg>
      </div>
      <TabStrip />
      <div className="mt-[7px] mb-[5px] shrink-0">
        <PanelHeader title="Messages" closable />
      </div>
    </main>
  );
}

/* ---------- Status bar and taskbar ---------- */

function StatusBar() {
  const pane = 'flex h-full items-center border-t border-l border-[#a0a0a0] pl-px whitespace-nowrap overflow-hidden';
  return (
    <footer className="flex h-[22px] shrink-0 gap-[2px] bg-[#f0f0f0] pt-[2px] pb-px">
      <div className={`${pane} w-[27%]`}>Press F1 for Help</div>
      <div className={`${pane} w-[13%]`} />
      <div className={`${pane} w-[11%] gap-1`}>
        <svg viewBox="0 0 16 14" className="h-[14px] w-4">
          <path d="M5 1h8l2 9-5 3z" fill="#c8281c" />
          <path d="M1 12.500L6.500 2 12 12.500z" fill="#f8d020" stroke="#b02010" />
          <path d="M6.500 5v4M6.500 10v1.500" stroke="#111" strokeWidth="1.500" />
        </svg>
        1 Message
      </div>
      <div className={`${pane} flex-1`}>No Selection</div>
      <div className={`${pane} w-[311px] gap-3`}>
        <span>Metric (m, kg, N, s, V, A)</span>
        <span>Degrees</span>
        <span>rad/s</span>
        <span>Celsius</span>
      </div>
      <div className="flex w-[23px] items-end justify-end">
        <svg viewBox="0 0 12 12" className="h-3 w-3" stroke="#909090">
          <path d="M1 12L12 1M5 12l7-7M9 12l3-3" />
        </svg>
      </div>
    </footer>
  );
}

const AnsysApp = () => (
  <svg viewBox="0 0 24 24" className="h-6 w-6">
    <circle cx="12" cy="12" r="12" fill="#f2cb1c" />
    <path d="M4 4a12 12 0 0116 0c-5-1-11-1-16 0z" fill="#fae27a" />
    <path d="M4 20L9.500 4h5L20 20l-4 1-4-12-4 12z" fill="#15130a" />
  </svg>
);

const APPS = [
  {
    name: 'File Explorer',
    icon: (
      <svg viewBox="0 0 24 24" className="h-6 w-6">
        <path d="M2 3h8l2 2h10v16H2z" fill="#f6d778" />
        <path d="M2 8h20v13H2z" fill="#fbe49a" />
        <path d="M5 22v-8h14v8h-4v-4H9v4z" fill="#3ab0d8" />
      </svg>
    ),
  },
  {
    name: 'Chrome',
    icon: (
      <svg viewBox="0 0 24 24" className="h-6 w-6">
        <circle cx="12" cy="12" r="11" fill="#fbc916" />
        <path d="M12 12L2.500 6.500A11 11 0 0121.500 6.500z" fill="#e0402f" />
        <path d="M2.500 6.500A11 11 0 0010.500 23l5-9L12 12z" fill="#2c9f4b" />
        <path d="M12 7h9.700L20 5H8z" fill="#e0402f" />
        <circle cx="12" cy="12" r="5" fill="#fff" />
        <circle cx="12" cy="12" r="4" fill="#4a86ee" />
      </svg>
    ),
  },
  { name: 'ANSYS Workbench', icon: <AnsysApp /> },
  {
    name: 'SolidWorks 2015',
    icon: (
      <svg viewBox="0 0 24 24" className="h-6 w-6" fontFamily="Liberation Sans, sans-serif" fontWeight="700" fill="#fff">
        <path d="M1 4l5-4h17v19l-3 5H2z" fill="#c8141c" />
        <path d="M1 4l5-4h17l-4 5z" fill="#ee5a5a" />
        <text x="1" y="16" fontSize="13">
          S
        </text>
        <text x="10" y="15" fontSize="13">
          W
        </text>
        <text x="6" y="23" fontSize="7.500">
          2015
        </text>
      </svg>
    ),
  },
  {
    name: 'Alarms & Clock',
    icon: (
      <svg viewBox="0 0 24 24" className="h-6 w-6" fill="none" stroke="#fff" strokeWidth="1.500">
        <path d="M2 6a4 4 0 015-5zM22 6a4 4 0 00-5-5z" fill="#fff" />
        <circle cx="12" cy="13" r="10" fill="#000" />
        <path d="M6 10l5 4 6-4" />
      </svg>
    ),
  },
  { name: 'ANSYS Launcher', icon: <AnsysApp /> },
  { name: 'ANSYS Mechanical', icon: <MechanicalLogo size="h-6 w-6" />, active: true },
];

function Taskbar() {
  return (
    <nav className="flex h-9 shrink-0 items-stretch bg-black text-white">
      <button type="button" aria-label="Start" className="flex w-12 items-center justify-center">
        <svg viewBox="0 0 16 16" className="h-4 w-4" fill="#fff">
          <path d="M0 2l7-1v6.500H0zM8 .9L16 0v7.500H8zM0 8.500h7V15l-7-1zM8 8.500h8V16l-8-1z" />
        </svg>
      </button>
      <button type="button" aria-label="Search" className="flex w-12 items-center justify-center">
        <svg viewBox="0 0 16 16" className="h-4 w-4" fill="none" stroke="#fff" strokeWidth="1.300">
          <circle cx="10" cy="6" r="5" />
          <path d="M6.500 9.500L0 16" />
        </svg>
      </button>
      <button type="button" aria-label="Task View" className="flex w-[49px] items-center justify-center">
        <svg viewBox="0 0 20 14" className="h-[14px] w-5" fill="none" stroke="#fff">
          <path d="M4.500.5h11v13h-11zM2.500 2.500h-2v9h2M17.500 2.500h2v9h-2" />
        </svg>
      </button>
      {APPS.map((app) => (
        <button
          key={app.name}
          type="button"
          aria-label={app.name}
          className={`flex w-[49px] items-center justify-center ${app.active ? 'bg-[#383838]' : ''}`}
        >
          {app.icon}
        </button>
      ))}
      <div className="ml-auto flex items-center gap-[9px] pr-[6px]">
        <svg viewBox="0 0 12 7" className="h-[7px] w-3" fill="none" stroke="#fff" strokeWidth="1.300">
          <path d="M1 6l5-5 5 5" />
        </svg>
        <svg viewBox="0 0 18 14" className="h-[14px] w-[18px]" fill="none" stroke="#fff">
          <path d="M5.500 4.500h10v7h-10zM16.500 6.500v3M1.500 1v3M4.500 1v3M.5 4.500h5v2h-1.500l-2 0zM3 7v4h2" />
          <path d="M7 6h4v4H7z" fill="#fff" stroke="none" />
        </svg>
        <svg viewBox="0 0 14 14" className="h-[14px] w-[14px]" fill="none" stroke="#fff" strokeWidth="1.200">
          <path d="M1 11A10 10 0 0112 2M4 13a8 8 0 018-8M7 13a5 5 0 015-5" />
          <path d="M9 11h4v3H9z" fill="#fff" stroke="none" />
        </svg>
        <svg viewBox="0 0 16 14" className="h-[14px] w-4" fill="none" stroke="#fff">
          <path d="M1 5h2.500L7 1.500v11L3.500 9H1zM9 5c1 1 1 3 0 4" />
          <path d="M11 3c2 2 2 6 0 8M13 1c3 3 3 9 0 12" stroke="#777" />
        </svg>
        <svg viewBox="0 0 16 16" className="h-4 w-4">
          <path d="M0 1h16v11H9v4l-4-4H0z" fill="#fff" />
          <path d="M3 4.500h10M3 6.500h10M3 8.500h7" stroke="#111" />
        </svg>
        <time className="flex flex-col items-center text-[11px] leading-4">
          <span>7:06 PM</span>
          <span>10/29/2015</span>
        </time>
      </div>
    </nav>
  );
}

export default function App() {
  return (
    <div className="flex h-screen w-full flex-col overflow-hidden bg-[#f8f8f8] font-['Open_Sans','Noto_Sans',sans-serif] text-xs leading-4 text-[#111]">
      <TitleBar />
      <div className="shrink-0 bg-[#f0f0f0]">
        <MenuRow />
        <GraphicsRow />
        <DisplayRow />
        <MeshRow />
      </div>
      <div className="flex min-h-0 flex-1">
        <aside className="mr-[5px] mb-[2px] flex w-[323px] shrink-0 flex-col gap-[6px] pt-px">
          <Outline />
          <Details />
        </aside>
        <GraphicsView />
      </div>
      <StatusBar />
      <Taskbar />
    </div>
  );
}
